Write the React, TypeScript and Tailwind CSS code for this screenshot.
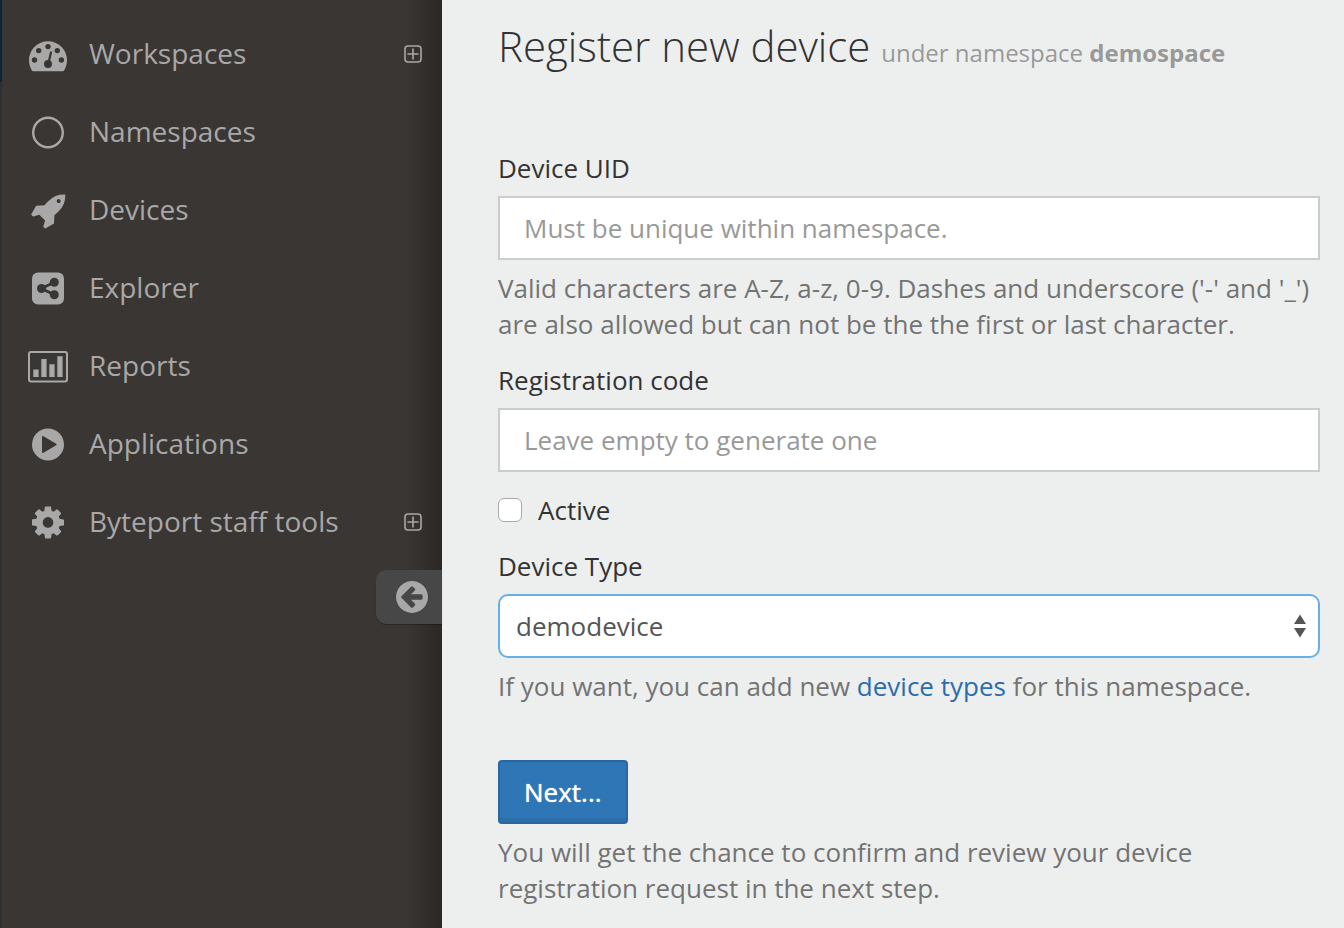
import type { ReactNode } from 'react';

const COG =
  'M1152 896q0-106-75-181t-181-75-181 75-75 181 75 181 181 75 181-75 75-181zm512-109v222q0 12-8 23t-20 13l-185 28q-19 54-39 91 35 50 107 138 10 12 10 25t-9 23q-27 37-99 108t-94 71q-12 0-26-9l-138-108q-44 23-91 38-16 136-29 186-7 28-36 28h-222q-14 0-24.5-8.5t-11.5-21.5l-28-184q-49-16-90-37l-141 107q-10 9-25 9-14 0-25-11-126-114-165-168-7-10-7-23 0-12 8-23 15-21 51-66.5t54-70.5q-27-50-41-99l-183-27q-13-2-21-12.5t-8-23.5v-222q0-12 8-23t19-13l186-28q14-46 39-92-40-57-107-138-10-12-10-24 0-10 9-23 26-36 98.5-107.5t94.5-71.5q13 0 26 10l138 107q44-23 91-38 16-136 29-186 7-28 36-28h222q14 0 24.5 8.5t11.5 21.5l28 184q49 16 90 37l142-107q9-9 24-9 13 0 25 10 129 119 165 170 7 8 7 22 0 12-8 23-15 21-51 66.5t-54 70.5q26 50 41 98l183 28q13 2 21 12.5t8 23.5z';
const ROCKET =
  'M1440 448q0-40-28-68t-68-28-68 28-28 68 28 68 68 28 68-28 28-68zm224-288q0 249-75.5 430.5t-253.5 360.5q-81 80-195 176l-20 379q-2 16-16 26l-384 224q-7 4-16 4-12 0-23-9l-64-64q-13-14-8-32l85-276-281-281-276 85q-3 1-9 1-14 0-23-9l-64-64q-17-19-5-39l224-384q10-14 26-16l379-20q96-114 176-195 188-187 358-258t431-71q14 0 24 9.5t10 22.5z';
const ARROW_CIRCLE =
  'M1408 960v-128q0-26-19-45t-45-19h-502l189-189q19-19 19-45t-19-45l-91-91q-18-18-45-18t-45 18l-362 362-91 91q-18 18-18 45t18 45l91 91 362 362q18 18 45 18t45-18l91-91q18-18 18-45t-18-45l-189-189h502q26 0 45-19t19-45zm256-64q0 209-103 385.5t-279.5 279.5-385.5 103-385.5-103-279.5-279.5-103-385.5 103-385.5 279.5-279.5 385.5-103 385.5 103 279.5 279.5 103 385.5z';

function Icon({ viewBox = '0 0 40 40', children }: { viewBox?: string; children: ReactNode }) {
  return (
    <svg viewBox={viewBox} className="size-10 shrink-0 fill-current" aria-hidden="true">
      {children}
    </svg>
  );
}

const dashboardIcon = (
  <Icon>
    <path d="M3.900 36.500C2 33.200 1 30 1 26.200a19 19 0 0 1 38 0c0 3.800-1 7-2.900 10.300Q35.500 37.200 34.800 37.200H5.200Q4.500 37.200 3.900 36.500Z" />
    <g className="fill-[#3a3633]">
      <circle cx="6.500" cy="26" r="2.700" />
      <circle cx="10.700" cy="16.600" r="2.700" />
      <circle cx="20" cy="12.600" r="2.700" />
      <circle cx="29.300" cy="16.600" r="2.700" />
      <circle cx="33.400" cy="26" r="2.700" />
      <circle cx="20" cy="30" r="4" />
    </g>
    <path d="M20.500 29 23 18.300" className="stroke-[#3a3633]" strokeWidth="2.200" strokeLinecap="round" />
  </Icon>
);

const circleIcon = (
  <Icon>
    <circle cx="20" cy="20.500" r="14.800" fill="none" stroke="currentColor" strokeWidth="2.400" />
  </Icon>
);

const shareIcon = (
  <Icon>
    <rect x="4" y="4.500" width="32" height="32" rx="6" />
    <g className="fill-[#3a3633] stroke-[#3a3633]">
      <path d="M26.300 14.300 13.500 20.500l12.800 6.200" fill="none" strokeWidth="2.800" />
      <circle cx="13.500" cy="20.500" r="4.500" stroke="none" />
      <circle cx="26.300" cy="14.300" r="4.500" stroke="none" />
      <circle cx="26.300" cy="26.700" r="4.500" stroke="none" />
    </g>
  </Icon>
);

const chartIcon = (
  <Icon>
    <rect x="1" y="6" width="38" height="29.600" rx="2" fill="none" stroke="currentColor" strokeWidth="2" />
    <path d="M5.300 23.500h5.300V31H5.300zM13.300 13h5.300v18h-5.300zM21.300 18.300h5.300V31h-5.300zM29.300 10.300h5.300V31h-5.300z" />
  </Icon>
);

const playIcon = (
  <Icon>
    <circle cx="20" cy="20.500" r="16" />
    <path
      d="M15 13.100v14.800L27.600 20.500Z"
      className="fill-[#3a3633] stroke-[#3a3633]"
      strokeWidth="2"
      strokeLinejoin="round"
    />
  </Icon>
);

const items: { label: string; icon: ReactNode; expandable?: boolean }[] = [
  { label: 'Workspaces', icon: dashboardIcon, expandable: true },
  { label: 'Namespaces', icon: circleIcon },
  { label: 'Devices', icon: <Icon viewBox="-128 -84 1920 1920"><path d={ROCKET} /></Icon> },
  { label: 'Explorer', icon: shareIcon },
  { label: 'Reports', icon: chartIcon },
  { label: 'Applications', icon: playIcon },
  { label: 'Byteport staff tools', icon: <Icon viewBox="-64 -84 1920 1920"><path d={COG} /></Icon>, expandable: true },
];

function PlusBox() {
  return (
    <svg viewBox="0 0 18 18" className="size-[18px] shrink-0" fill="none" stroke="currentColor" aria-hidden="true">
      <rect x="1" y="1" width="16" height="16" rx="3" strokeWidth="1.600" />
      <path d="M9 3.500v11M3.500 9h11" strokeWidth="1.600" />
    </svg>
  );
}

function Sidebar() {
  return (
    <aside className="flex w-[442px] shrink-0 bg-[#3a3633] bg-linear-to-r from-[#3a3633] from-92% to-[#2a2724] text-[#a8a8a8]">
      <div className="flex w-0.5 shrink-0 flex-col bg-[#2f3031]">
        <div className="h-[82px] bg-[#08253c]" />
      </div>
      <div className="flex flex-1 flex-col pt-[15px]">
        <nav>
          <ul>
            {items.map((item) => (
              <li key={item.label}>
                <a href="#" className="flex h-[78px] items-center pr-5 pl-[26px] text-[28px] leading-9">
                  {item.icon}
                  <span className="ml-[21px] flex-1 pb-0.5">{item.label}</span>
                  {item.expandable && <PlusBox />}
                </a>
              </li>
            ))}
          </ul>
        </nav>
        <button
          type="button"
          aria-label="Collapse menu"
          className="mt-[9px] flex h-[54px] w-[66px] items-center self-end rounded-l-[10px] bg-[#474747] pl-4 shadow-[0_1px_1px_rgba(0,0,0,0.3)]"
        >
          <Icon viewBox="-64 -64 1920 1920"><path d={ARROW_CIRCLE} /></Icon>
        </button>
      </div>
    </aside>
  );
}

function TextField({ id, label, placeholder }: { id: string; label: string; placeholder: string }) {
  return (
    <div>
      <label htmlFor={id} className="block">{label}</label>
      <input
        id={id}
        type="text"
        placeholder={placeholder}
        className="mt-2.5 block h-16 w-full border-2 border-[#cccccc] bg-white px-6 text-[#555555] outline-none placeholder:text-[#999999] placeholder:opacity-100"
      />
    </div>
  );
}

function Help({ children }: { children: ReactNode }) {
  return <p className="mt-2.5 text-[#737373]">{children}</p>;
}

export default function App() {
  return (
    <div className="flex min-h-screen bg-[#edefee] font-['Open_Sans','Noto_Sans',sans-serif]">
      <Sidebar />
      <main className="min-w-0 flex-1 pt-4 pr-6 pb-5 pl-14 text-[26px] leading-9 text-[#333333]">
        <h1 className="text-[42px] leading-[60px] font-light">
          Register new device <small className="text-2xl font-normal text-[#999999]">under namespace <strong className="font-bold">demospace</strong></small>
        </h1>
        <form className="mt-[74px]" onSubmit={(e) => e.preventDefault()}>
          <TextField id="uid" label="Device UID" placeholder="Must be unique within namespace." />
          <Help>
            Valid characters are A-Z, a-z, 0-9. Dashes and underscore ('-' and '_') are also allowed but can not be the the first or last character.
          </Help>
          <div className="mt-5">
            <TextField id="code" label="Registration code" placeholder="Leave empty to generate one" />
          </div>
          <label className="mt-5 flex items-center gap-4">
            <input
              type="checkbox"
              className="size-6 appearance-none rounded-md border border-[#a9a9a9] bg-white checked:bg-[#2e76b5]"
            />
            Active
          </label>
          <label htmlFor="type" className="mt-5 block">Device Type</label>
          <div className="relative mt-2.5">
            <select
              id="type"
              className="block h-16 w-full appearance-none rounded-[10px] border-2 border-[#66afe9] bg-white px-4 text-[#555555] outline-none"
            >
              <option>demodevice</option>
            </select>
            <svg
              viewBox="0 0 12 24"
              className="pointer-events-none absolute top-5 right-3.5 h-6 w-3 fill-[#555555]"
              aria-hidden="true"
            >
              <path d="M6 .5 12 10H0zM0 14h12L6 23.500z" />
            </svg>
          </div>
          <Help>
            If you want, you can add new <a href="#" className="text-[#2a6cad]">device types</a> for this namespace.
          </Help>
          <button
            type="submit"
            className="mt-14 block h-16 rounded-sm border-2 border-[#2a67a0] bg-[#2e76b5] px-6 text-white shadow-[inset_0_-4px_0_rgba(0,0,0,0.05)] [text-shadow:0_0_1px_#fff]"
          >
            Next...
          </button>
          <Help>You will get the chance to confirm and review your device registration request in the next step.</Help>
        </form>
      </main>
    </div>
  );
}
